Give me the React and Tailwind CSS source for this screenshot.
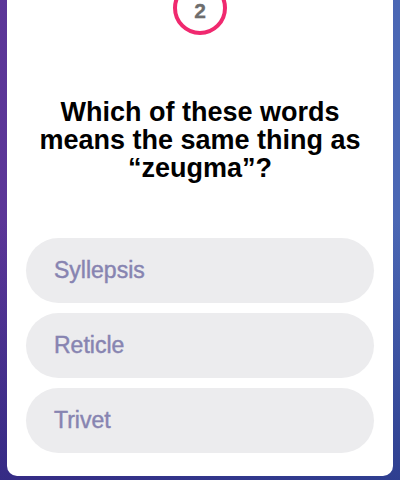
import React from "react";

const options = ["Syllepsis", "Reticle", "Trivet"];

function QuestionBadge({ number }) {
  return (
    <div className="-mt-[19px] flex h-[54px] w-[54px] shrink-0 items-center justify-center rounded-full border-[4px] border-[#f0296f] bg-white pt-[5px]">
      <span className="text-[21px] font-bold text-[#6d6d6d] [-webkit-text-stroke:0.3px_#6d6d6d]">
        {number}
      </span>
    </div>
  );
}

export default function App() {
  return (
    <div
      className="h-[480px] overflow-hidden px-[7px] pb-[4px] bg-[linear-gradient(to_bottom,transparent_46%,rgba(28,36,120,0.6)_100%),linear-gradient(to_right,#5b3597,#4a67b4)]"
      style={{ fontFamily: '"Liberation Sans", Arial, sans-serif' }}
    >
      <div className="flex h-full flex-col items-center rounded-b-[10px] bg-white px-[19px]">
        <QuestionBadge number={2} />

        <h1 className="mt-[63px] text-center text-[27px] font-bold leading-[28px] text-black">
          Which of these words
          <br />
          means the same thing as
          <br />
          “zeugma”?
        </h1>

        <div className="mt-[56px] flex w-full flex-col gap-[10px]">
          {options.map((opt) => (
            <button
              key={opt}
              className="flex h-[65px] w-full items-center rounded-full bg-[#ececee] px-[28px] text-left text-[23px] text-[#8784b1] [-webkit-text-stroke:0.45px_#8784b1]"
            >
              {opt}
            </button>
          ))}
        </div>
      </div>
    </div>
  );
}
